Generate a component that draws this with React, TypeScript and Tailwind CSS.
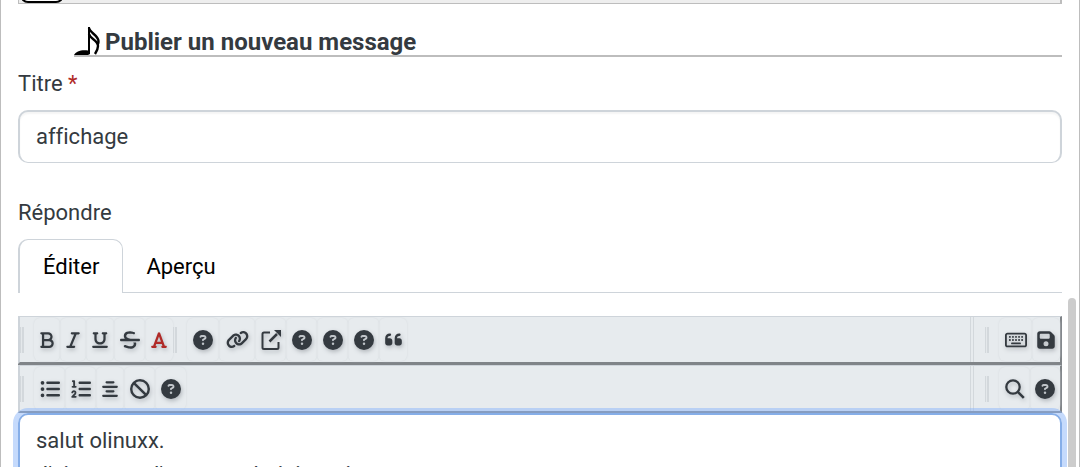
import { useState } from 'react';
import type { ReactNode } from 'react';
import {
    FaAlignCenter,
    FaBan,
    FaBold,
    FaCircleQuestion,
    FaFloppyDisk,
    FaFont,
    FaItalic,
    FaLink,
    FaListOl,
    FaListUl,
    FaQuoteLeft,
    FaRegKeyboard,
    FaStrikethrough,
    FaUnderline,
} from 'react-icons/fa6';

interface Tool {
    label: string;
    icon: ReactNode;
    width: string;
    color?: string;
}

const ExternalIcon = () => (
    <svg viewBox="0 0 20 20" className="size-5" fill="none" stroke="currentColor" strokeWidth="2">
        <path d="M9 2.500H3Q1.500 2.500 1.500 4v13.500Q1.500 19 3 19h13q1.500 0 1.500-1.500V12" />
        <path d="M8.500 11.500 16 4" strokeWidth="2.500" />
        <path d="M13 0H20v7Z" fill="currentColor" stroke="none" />
    </svg>
);

const SearchIcon = () => (
    <svg viewBox="0 0 20 20" className="size-5" fill="none" stroke="currentColor" strokeWidth="2.300">
        <circle cx="8" cy="8" r="6.700" />
        <path d="m12.800 12.800 6 6" strokeWidth="2.600" />
    </svg>
);

const NoteIcon = () => (
    <svg viewBox="0 0 26 28" className="h-7 w-[26px]" fill="#000">
        <path d="M0 28C2 24.500 7 22.500 14 23.500V0h2v27l-2 1Z" />
        <path
            d="M15 1c1 5 9 7 9.500 13 .2 2-.5 3.500-1 4.500M15 7c1 5 9 6 9 12 0 3-1 5-3 8"
            fill="none"
            stroke="#000"
            strokeWidth="2.400"
        />
    </svg>
);

const question = <FaCircleQuestion size={20} />;

const formatTools: Tool[] = [
    { label: 'Gras', icon: <FaBold size={18} />, width: 'w-[26px]' },
    { label: 'Italique', icon: <FaItalic size={18} />, width: 'w-[26px]' },
    { label: 'Souligné', icon: <FaUnderline size={18} />, width: 'w-7' },
    { label: 'Barré', icon: <FaStrikethrough size={20} />, width: 'w-[31px]' },
    { label: 'Couleur du texte', icon: <FaFont size={18} />, width: 'w-7', color: 'text-[#b02a27]' },
];

const insertTools: Tool[] = [
    { label: 'Titre', icon: question, width: 'w-8' },
    { label: 'Lien wiki', icon: <FaLink size={23} />, width: 'w-9' },
    { label: 'Lien externe', icon: <ExternalIcon />, width: 'w-[31px]' },
    { label: 'Image', icon: question, width: 'w-[31px]' },
    { label: 'Tableau', icon: question, width: 'w-[31px]' },
    { label: 'Code', icon: question, width: 'w-[31px]' },
    { label: 'Citation', icon: <FaQuoteLeft size={19} />, width: 'w-7' },
];

const listTools: Tool[] = [
    { label: 'Liste à puces', icon: <FaListUl size={20} />, width: 'w-[31px]' },
    { label: 'Liste numérotée', icon: <FaListOl size={20} />, width: 'w-[31px]' },
    { label: 'Centrer', icon: <FaAlignCenter size={18} />, width: 'w-7' },
    { label: 'Sans interprétation', icon: <FaBan size={20} />, width: 'w-[31px]' },
    { label: 'Aide', icon: question, width: 'w-[31px]' },
];

const keyboardTools: Tool[] = [
    { label: 'Clavier', icon: <FaRegKeyboard size={22} />, width: 'w-[33px]' },
    { label: 'Enregistrer', icon: <FaFloppyDisk size={20} />, width: 'w-7' },
];

const searchTools: Tool[] = [
    { label: 'Rechercher', icon: <SearchIcon />, width: 'w-[31px]' },
    { label: 'Aide de la syntaxe', icon: question, width: 'w-[30px]' },
];

function ToolGroup({ tools }: { tools: Tool[] }) {
    return (
        <div className="flex h-full items-center py-px">
            {tools.map((tool) => (
                <button
                    key={tool.label}
                    type="button"
                    aria-label={tool.label}
                    className={`flex h-full shrink-0 items-center justify-center rounded-md shadow-[0_0_2px_#d5d9dd] [&>svg]:drop-shadow-[1px_2px_2px_#b0b5ba] ${tool.width} ${tool.color ?? 'text-[#343a40]'}`}
                >
                    {tool.icon}
                </button>
            ))}
        </div>
    );
}

const Grip = () => <span className="mr-[10px] h-[26px] w-1 shrink-0 border-r-2 border-l border-[#d3d8dc] bg-[#e4e8eb]" />;

function ToolbarRow({ left, right }: { left: Tool[][]; right: Tool[] }) {
    return (
        <div className="flex h-12 items-stretch border-t border-r-2 border-b-2 border-l-2 border-t-[#ced4da] border-r-[#808488] border-b-[#808488] border-l-[#ced4da] bg-[#e7ebee]">
            <div className="flex flex-1 items-center">
                {left.map((tools, i) => (
                    <div key={i} className="flex h-full items-center">
                        <Grip />
                        <ToolGroup tools={tools} />
                    </div>
                ))}
            </div>
            <div className="flex items-center border-l-4 border-double border-[#d3d8dc] pl-[11px]">
                <Grip />
                <ToolGroup tools={right} />
            </div>
        </div>
    );
}

export default function App() {
    const [title, setTitle] = useState('affichage');
    const [message, setMessage] = useState("salut olinuxx.\nJ'ai comme l'aspect administration");
    const [tab, setTab] = useState('Éditer');

    return (
        <div className="relative h-screen overflow-hidden border-x border-[#bdbdbd] bg-white px-[17px] font-[Roboto,sans-serif] text-[22px] leading-8 text-[#343a40] [font-variant-ligatures:none]">
            {/* End of the previous message */}
            <div className="flex h-1 items-end overflow-hidden border-r-2 border-b border-l border-[#bdbdbd] bg-[#eee]">
                <div className="ml-px h-5 w-11 shrink-0 rounded-lg border-2 border-black bg-white" />
            </div>

            <h2 className="mt-6 ml-14 flex h-[29px] items-end gap-[5px] border-b-2 border-[#bdbdbd] text-2xl font-bold">
                <NoteIcon />
                <span className="leading-[26px]">Publier un nouveau message</span>
            </h2>

            <label htmlFor="title" className="mt-[11px] block">
                Titre <span className="text-[#b02a27]">*</span>
            </label>
            <input
                id="title"
                value={title}
                onChange={(e) => setTitle(e.target.value)}
                className="mt-[10px] block h-[53px] w-full rounded-[10px] border-2 border-b border-[#ced4da] px-4 pb-[2px] shadow-[inset_0_2px_2px_#f5f5f5] outline-none"
            />

            <label htmlFor="message" className="mt-[34px] block">Répondre</label>

            <div role="tablist" className="mt-[10px] flex h-[54px] border-b border-[#ced4da]">
                {['Éditer', 'Aperçu'].map((name) => (
                    <button
                        key={name}
                        type="button"
                        role="tab"
                        aria-selected={tab === name}
                        onClick={() => setTab(name)}
                        className={`h-[54px] rounded-t-[10px] border-t px-[23px] pt-px text-black ${tab === name ? 'border-r border-l-2 border-[#ced4da] bg-white' : 'border-transparent'}`}
                    >
                        {name}
                    </button>
                ))}
            </div>

            {/* Editor */}
            <div className="mt-[23px]">
                <div className="flex flex-col gap-px bg-[#808488]">
                    <ToolbarRow left={[formatTools, insertTools]} right={keyboardTools} />
                    <ToolbarRow left={[listTools]} right={searchTools} />
                </div>
                <textarea
                    id="message"
                    rows={6}
                    value={message}
                    onChange={(e) => setMessage(e.target.value)}
                    className="relative block w-full resize-none rounded-[10px] border-2 border-[#86aee8] px-4 py-[9px] leading-[34px] ring-[5px] ring-[#8bb6fa]/50 outline-none"
                />
            </div>

            {/* Scrollbar thumb */}
            <div className="absolute top-[298px] right-[3px] bottom-0 w-2 rounded-t-full bg-[#cccccc]" />
        </div>
    );
}
